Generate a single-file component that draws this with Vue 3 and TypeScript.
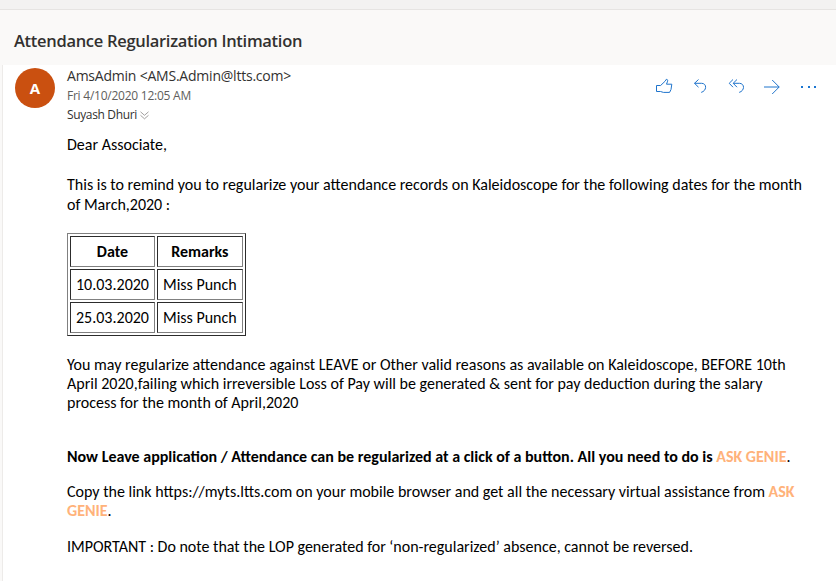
<script setup lang="ts">
interface Attendance {
  date: string
  remark: string
}

const records: Attendance[] = [
  { date: '10.03.2020', remark: 'Miss Punch' },
  { date: '25.03.2020', remark: 'Miss Punch' },
]
</script>

<template>
  <div class="page">
    <div class="topbar"></div>
    <header class="subject">
      <h1>Attendance Regularization Intimation</h1>
    </header>
    <main class="message">
      <div class="avatar">A</div>
      <div class="content">
        <div class="meta">
          <div class="sender">
            <div class="from">AmsAdmin &lt;AMS.Admin@ltts.com&gt;</div>
            <div class="date">Fri 4/10/2020 12:05 AM</div>
            <div class="to">
              <span>Suyash Dhuri</span>
              <svg class="chevrons" width="9" height="9" viewBox="0 0 9 9">
                <path d="M.5 .8 4.5 4.3 8.5 .8M.5 4.3 4.5 7.8 8.5 4.3" />
              </svg>
            </div>
          </div>
          <div class="actions">
            <svg width="18" height="16" viewBox="0 0 18 16">
              <path d="M1.5 7.5H5.6L10.3 3 11.2 1.4C12.4 1.2 12.9 2 12.6 3.2L11.5 6.2H16.8L16 11.5 14.6 14.4H8.4L5.5 13.5H1.5Z" />
            </svg>
            <svg width="14" height="16" viewBox="0 0 14 16">
              <path d="M5.5 1.5 1.5 5.3 5.5 9.2M1.5 5.3H8.6C11.2 5.3 12.8 7.2 12.6 9.4 12.4 11.6 11 13.6 8.2 14.4" />
            </svg>
            <svg width="17" height="16" viewBox="0 0 17 16">
              <path d="M5 1.5 1.2 5.3 5 9.2M9 1.5 5.2 5.3 9 9.2M5.2 5.3H11.4C14 5.3 15.6 7.2 15.5 9.4 15.3 11.6 14 13.6 11.2 14.4" />
            </svg>
            <svg width="18" height="16" viewBox="0 0 18 16">
              <path d="M1 8H16.2M9.2 1 16.2 8 9.2 15" />
            </svg>
            <svg class="dots" width="16" height="16" viewBox="0 0 16 16">
              <path d="M0 7h2v2H0zM7 7h2v2H7zM13 7h2v2h-2z" />
            </svg>
          </div>
        </div>
        <div class="body">
          <p class="greeting">Dear Associate,</p>
          <p class="intro">
            This is to remind you to regularize your attendance records on Kaleidoscope for the following dates for the month<br />of March,2020 :
          </p>
          <table>
            <thead>
              <tr><th>Date</th><th>Remarks</th></tr>
            </thead>
            <tbody>
              <tr v-for="r in records" :key="r.date">
                <td>{{ r.date }}</td>
                <td>{{ r.remark }}</td>
              </tr>
            </tbody>
          </table>
          <p class="notice">
            You may regularize attendance against LEAVE or Other valid reasons as available on Kaleidoscope, BEFORE 10th<br />April 2020,failing which irreversible Loss of Pay will be generated &amp; sent for pay deduction during the salary<br />process for the month of April,2020
          </p>
          <p class="promo">
            <b>Now Leave application / Attendance can be regularized at a click of a button. All you need to do is <span class="genie">ASK GENIE</span></b>.
          </p>
          <p class="link">
            Copy the link https://myts.ltts.com on your mobile browser and get all the necessary virtual assistance from <b class="genie">ASK<br />GENIE</b>.
          </p>
          <p class="important">
            IMPORTANT : Do note that the LOP generated for ‘non-regularized’ absence, cannot be reversed.
          </p>
        </div>
      </div>
    </main>
  </div>
</template>

<style>
body {
  background: #fff;
}
</style>

<style scoped>
.page {
  height: 581px;
  overflow: hidden;
  display: flex;
  flex-direction: column;
  background: #faf9f8;
  font-family: 'Segoe UI', 'Open Sans', sans-serif;
  color: #323130;
}
.topbar {
  box-sizing: border-box;
  flex: none;
  height: 10px;
  background: #f3f2f1;
  border-bottom: 1px solid #e6e4e2;
}
.subject {
  flex: none;
  height: 55px;
  padding: 0 14px;
  display: flex;
  align-items: center;
}
h1 {
  margin: 0;
  padding: 8px 0 1px;
  font-size: 16.5px;
  line-height: 24px;
  font-weight: 600;
  letter-spacing: -0.3px;
}
.message {
  flex: 1;
  display: flex;
  align-items: flex-start;
  gap: 12px;
  margin-left: 2px;
  padding: 3px 0 0 12px;
  background: #fff;
  border-left: 1px solid #edebe9;
}
.avatar {
  flex: none;
  width: 40px;
  height: 40px;
  border-radius: 50%;
  background: #ca5010;
  color: #fff;
  font-size: 15px;
  font-weight: 700;
  line-height: 41px;
  text-align: center;
}
.content {
  flex: 1;
  min-width: 0;
}
.meta {
  display: flex;
  justify-content: space-between;
  height: 67px;
}
.sender {
  white-space: nowrap;
}
.from {
  font-size: 14px;
  line-height: 16px;
  padding-bottom: 2px;
  letter-spacing: -0.22px;
}
.date {
  font-size: 12px;
  line-height: 20px;
  letter-spacing: -0.24px;
  color: #605e5c;
}
.to {
  display: flex;
  align-items: center;
  gap: 3px;
  font-size: 12px;
  line-height: 18px;
  letter-spacing: -0.36px;
}
svg {
  flex: none;
  fill: none;
  stroke: #1f74cc;
  stroke-width: 1;
}
.chevrons {
  stroke: #8a8886;
  stroke-width: 0.8;
}
.actions {
  display: flex;
  height: 16px;
  gap: 20px;
  padding: 11px 19px 0 0;
}
.actions svg:nth-child(-n + 3) {
  margin-top: -1px;
}
.actions svg:nth-child(2) {
  margin-right: 1px;
}
.actions svg:nth-child(4) {
  margin-left: -2px;
}
.dots {
  fill: #1a75d1;
  stroke: none;
}
.body {
  font-family: Calibri, Carlito, Lato, sans-serif;
  font-size: 16px;
  line-height: 19px;
  color: #000;
  white-space: nowrap;
}
p {
  margin: 0;
}
.greeting {
  line-height: 20px;
  margin-bottom: 20px;
}
.intro {
  line-height: 20px;
  margin-bottom: 18px;
}
table {
  border: 1px solid;
  border-color: #808080 #2c2c2c #2c2c2c #808080;
  border-spacing: 2px;
  border-collapse: separate;
}
th,
td {
  height: 19px;
  padding: 5px;
  text-align: center;
  border: 1px solid;
  border-color: #2c2c2c #808080 #808080 #2c2c2c;
}
.notice {
  margin-top: 19px;
}
.promo {
  margin-top: 35px;
}
.link {
  margin-top: 16px;
}
.important {
  margin-top: 17px;
}
.genie {
  color: #ffb27a;
}
</style>
